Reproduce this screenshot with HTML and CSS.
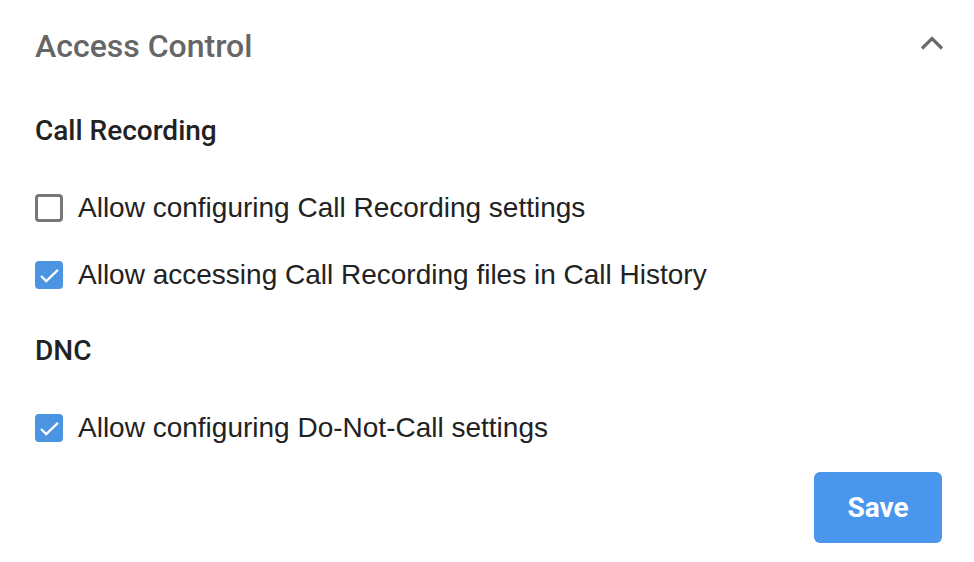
FILE: index.html
```html
<!DOCTYPE html>
<html lang="en">
<head>
    <meta charset="UTF-8">
    <title>Access Control</title>
    <link rel="stylesheet" href="styles.css">
</head>
<body>
    <div class="panel">
        <div class="panel-header">
            <h1 class="panel-title">Access Control</h1>
            <svg class="chevron" width="26" height="16" viewBox="0 0 26 16">
                <path d="M3 13.5 L13 3.5 L23 13.5" fill="none" stroke="#6b6b6b" stroke-width="3.2"/>
            </svg>
        </div>

        <div class="section">
            <h2 class="section-title">Call Recording</h2>
            <label class="option">
                <span class="box"></span>
                <span class="option-text">Allow configuring Call Recording settings</span>
            </label>
            <label class="option">
                <span class="box checked">
                    <svg class="tick" viewBox="0 0 22 16"><path d="M2 8.5 L7.5 14 L20 2" fill="none" stroke="#fff" stroke-width="2.4"/></svg>
                </span>
                <span class="option-text">Allow accessing Call Recording files in Call History</span>
            </label>
        </div>

        <div class="section">
            <h2 class="section-title">DNC</h2>
            <label class="option">
                <span class="box checked">
                    <svg class="tick" viewBox="0 0 22 16"><path d="M2 8.5 L7.5 14 L20 2" fill="none" stroke="#fff" stroke-width="2.4"/></svg>
                </span>
                <span class="option-text">Allow configuring Do-Not-Call settings</span>
            </label>
        </div>

        <div class="actions">
            <button class="save-btn">Save</button>
        </div>
    </div>
</body>
</html>
```

FILE: styles.css
```css
* {
    margin: 0;
    padding: 0;
    box-sizing: border-box;
}

body {
    background: #fff;
    font-family: Roboto, 'Liberation Sans', Arial, sans-serif;
    color: #222;
}

.panel {
    padding: 26px 29px 0 35px;
}

.panel-header {
    display: flex;
    justify-content: space-between;
    align-items: center;
    height: 40px;
}

.panel-title {
    font-size: 32px;
    font-weight: 500;
    color: #666;
}

.chevron {
    margin-top: -6px;
}

.section {
    display: flex;
    flex-direction: column;
}

.section-title {
    font-size: 28px;
    font-weight: 500;
    color: #222;
    height: 34px;
    line-height: 34px;
    margin-top: 48px;
    margin-bottom: 40px;
}

.section + .section .section-title {
    margin-top: 39px;
}

.option {
    display: flex;
    align-items: center;
    gap: 15px;
    height: 40px;
    margin-bottom: 27px;
}

.section .option:last-child {
    margin-bottom: 0;
}

.box {
    width: 28px;
    height: 28px;
    border: 3px solid #777;
    border-radius: 4px;
    display: flex;
    align-items: center;
    justify-content: center;
    flex-shrink: 0;
}

.box.checked {
    background: #4a94e2;
    border: none;
}

.tick {
    width: 21px;
    height: 15px;
    flex-shrink: 0;
}

.option-text {
    font-family: 'Liberation Sans', Arial, sans-serif;
    font-size: 28px;
    color: #222;
}

.actions {
    display: flex;
    justify-content: flex-end;
    margin-top: 24px;
    padding-right: 3px;
}

.save-btn {
    width: 128px;
    height: 71px;
    background: #4a96ec;
    border: none;
    border-radius: 6px;
    color: #fff;
    font-family: Roboto, Arial, sans-serif;
    font-size: 28px;
    font-weight: 700;
}
```
